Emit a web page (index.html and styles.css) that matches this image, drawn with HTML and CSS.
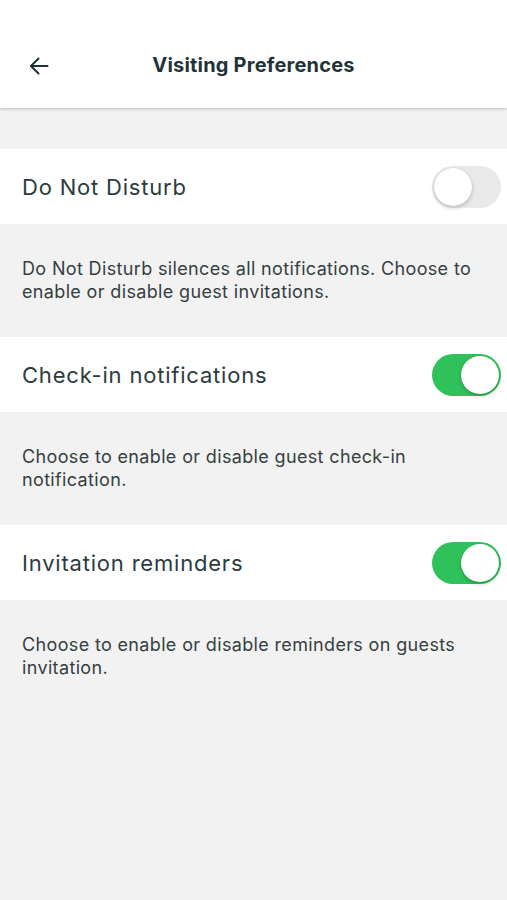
FILE: index.html
```html
<!DOCTYPE html>
<html lang="en">
<head>
<meta charset="utf-8">
<title>Visiting Preferences</title>
<link rel="stylesheet" href="styles.css">
</head>
<body>
<header class="header">
  <button class="back" aria-label="Back">
    <svg width="20" height="18" viewBox="0 0 20 18" fill="none" stroke="#1f3035" stroke-width="2" stroke-linecap="round" stroke-linejoin="round">
      <path d="M18.5 9H2"/>
      <path d="M9.5 1.5L2 9l7.5 7.5"/>
    </svg>
  </button>
  <h1 class="title">Visiting Preferences</h1>
</header>
<main class="content">
  <section class="row">
    <span class="label">Do Not Disturb</span>
    <span class="toggle"><span class="thumb"></span></span>
  </section>
  <p class="desc">Do Not Disturb silences all notifications. Choose to enable or disable guest invitations.</p>
  <section class="row">
    <span class="label">Check-in notifications</span>
    <span class="toggle on"><span class="thumb"></span></span>
  </section>
  <p class="desc">Choose to enable or disable guest check-in notification.</p>
  <section class="row">
    <span class="label">Invitation reminders</span>
    <span class="toggle on"><span class="thumb"></span></span>
  </section>
  <p class="desc">Choose to enable or disable reminders on guests invitation.</p>
</main>
</body>
</html>
```
FILE: styles.css
```css
* { box-sizing: border-box; }
html, body { margin: 0; padding: 0; }
body {
  background: #f2f2f2;
  font-family: Inter, "Noto Sans", "Liberation Sans", sans-serif;
  color: #2c3b40;
  width: 507px;
  min-height: 900px;
}
.header {
  position: relative;
  z-index: 1;
  height: 108px;
  padding-top: 22px;
  background: #ffffff;
  display: flex;
  align-items: center;
  justify-content: center;
  box-shadow: 0 1px 3px rgba(0,0,0,0.22);
}
.back {
  position: absolute;
  left: 28px;
  top: 56px;
  width: 22px;
  height: 20px;
  padding: 0;
  border: 0;
  background: none;
  display: flex;
  align-items: center;
  justify-content: center;
}
.title {
  margin: 0;
  font-size: 20px;
  font-weight: 700;
  color: #1f3338;
  letter-spacing: 0.2px;
}
.content {
  padding-top: 41px;
}
.row {
  height: 75px;
  background: #ffffff;
  display: flex;
  align-items: center;
  justify-content: space-between;
  padding: 0 6px 0 22px;
}
.label {
  font-size: 22px;
  letter-spacing: 0.8px;
  color: #2c3b40;
}
.desc {
  margin: 0;
  padding: 33px 22px 34px 22px;
  font-size: 18px;
  line-height: 23px;
  letter-spacing: 0.35px;
  color: #353f42;
}
.toggle {
  width: 69px;
  height: 42px;
  border-radius: 21px;
  background: #e9e9ea;
  padding: 2px;
  display: flex;
}
.toggle.on {
  background: #30c25a;
  justify-content: flex-end;
}
.thumb {
  width: 38px;
  height: 38px;
  border-radius: 50%;
  background: #ffffff;
  box-shadow: 0 2px 4px rgba(0,0,0,0.2), 0 0 1px rgba(0,0,0,0.15);
}
```
